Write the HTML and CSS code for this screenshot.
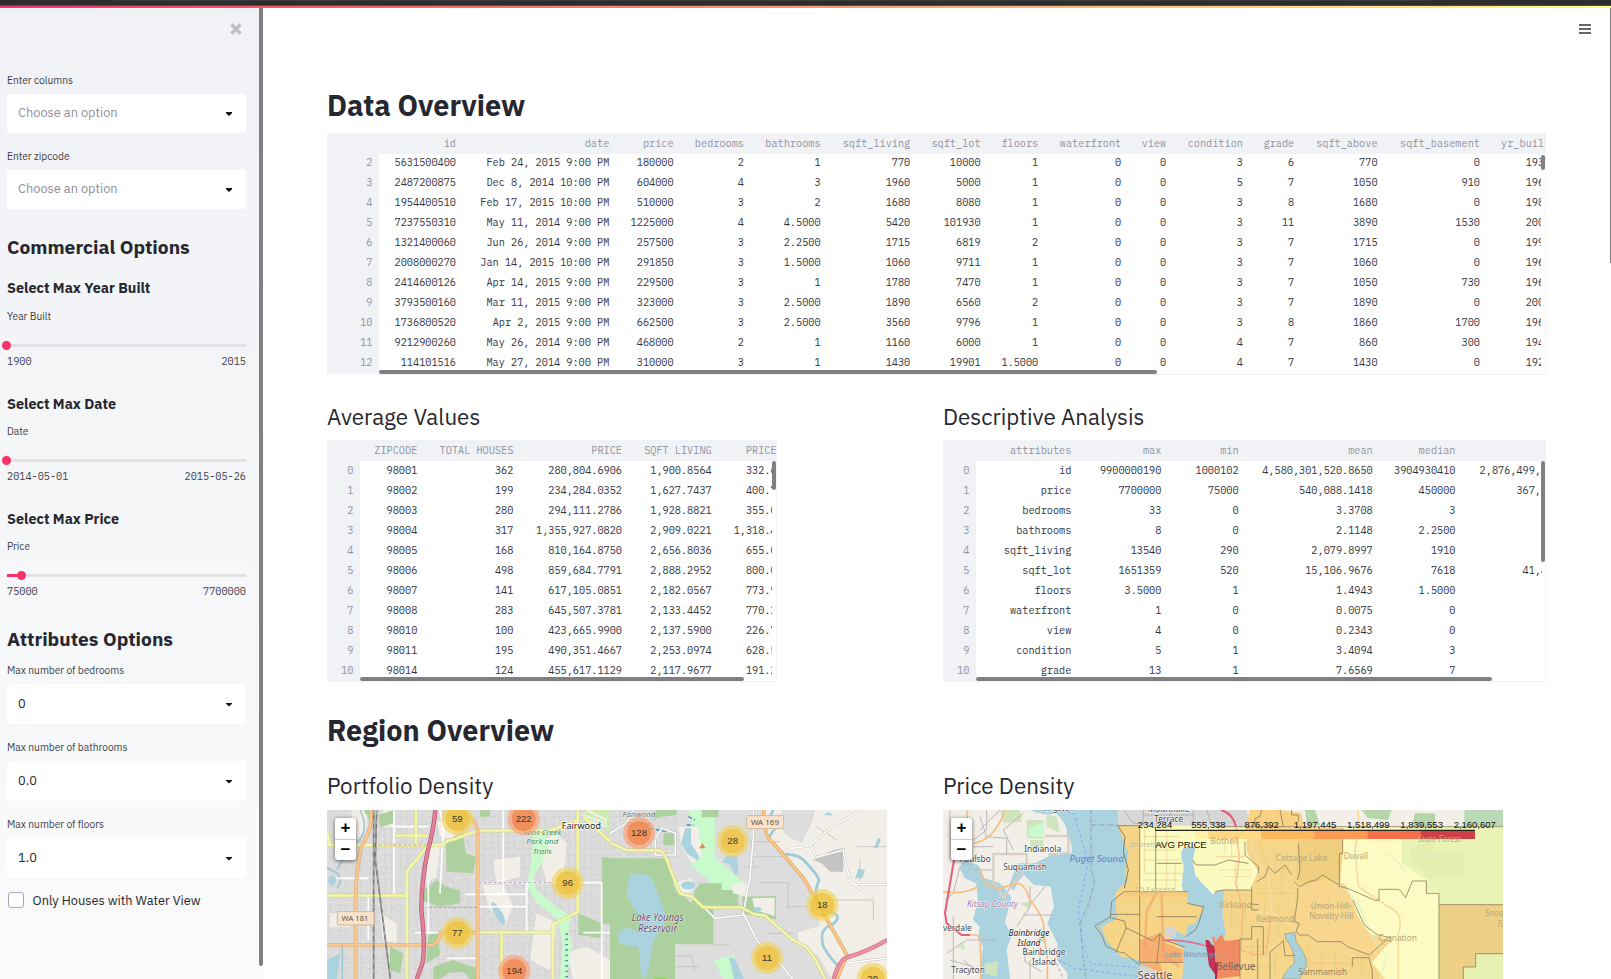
FILE: index.html
```html
<!DOCTYPE html>
<html lang="en">
<head>
<meta charset="utf-8">
<title>House data</title>
<link rel="stylesheet" href="styles.css">
</head>
<body>
<div class="chrome"><div class="chrome-tab"></div></div>
<div class="decoration"></div>
<div class="app">
  <aside class="sidebar">
    <div class="close"><svg width="12" height="12" viewBox="0 0 12 12"><path d="M1.5 1.5 10.5 10.5M10.5 1.5 1.5 10.5" stroke="#bdbfc5" stroke-width="3.2" fill="none"/></svg></div>
    <div class="label first">Enter columns</div>
    <div class="select empty"><span>Choose an option</span><i class="caret"></i></div>
    <div class="label gap">Enter zipcode</div>
    <div class="select empty"><span>Choose an option</span><i class="caret"></i></div>
    <h2 class="side-title t1">Commercial Options</h2>
    <h3 class="side-sub s1">Select Max Year Built</h3>
    <div class="label tight year">Year Built</div>
    <div class="slider"><b></b></div>
    <div class="ticks"><span>1900</span><span>2015</span></div>
    <h3 class="side-sub">Select Max Date</h3>
    <div class="label tight">Date</div>
    <div class="slider"><b></b></div>
    <div class="ticks"><span>2014-05-01</span><span>2015-05-26</span></div>
    <h3 class="side-sub">Select Max Price</h3>
    <div class="label tight">Price</div>
    <div class="slider price"><b></b></div>
    <div class="ticks"><span>75000</span><span>7700000</span></div>
    <h2 class="side-title t2">Attributes Options</h2>
    <div class="label attr">Max number of bedrooms</div>
    <div class="select tall"><span>0</span><i class="caret"></i></div>
    <div class="label gap">Max number of bathrooms</div>
    <div class="select tall"><span>0.0</span><i class="caret"></i></div>
    <div class="label gap">Max number of floors</div>
    <div class="select tall"><span>1.0</span><i class="caret"></i></div>
    <div class="check"><span class="box"></span><span class="check-text">Only Houses with Water View</span></div>
    <div class="side-scroll"></div>
  </aside>
  <main class="main">
    <div class="menu"><svg width="12" height="10" viewBox="0 0 12 10"><path d="M0 1H12M0 5H12M0 9H12" stroke="#33343f" stroke-width="1.4"/></svg></div>
    <div class="page-scroll"></div>
    <h1 class="title d1">Data Overview</h1>
    <div class="frame" id="overview"></div>
    <div class="cols">
      <section><h2 class="sub a1">Average Values</h2><div class="frame average" id="average"></div></section>
      <section><h2 class="sub a2">Descriptive Analysis</h2><div class="frame" id="descriptive"></div></section>
    </div>
    <h1 class="title region">Region Overview</h1>
    <div class="cols maps">
      <section><h2 class="sub a3">Portfolio Density</h2>
        <div class="map">
          <svg class="map-art" width="560" height="169" viewBox="0 0 560 169">
            <defs>
              <pattern id="st" width="46" height="38" patternUnits="userSpaceOnUse"><path d="M0 8H30V30H46M12 8V38M30 0V20M30 18H46M0 26H12" fill="none" stroke="#cecdcd" stroke-width="2"/></pattern>
            </defs>
            <rect width="560" height="169" fill="#dddddd"/>
            <g transform="translate(-7 -110) scale(.33333)">
              <rect x="21" y="330" width="850" height="507" fill="url(#st)"/>
              <g fill="#f2efe9"><path d="M95 330h45v55l-25 30-20-30zM350 360l60 20-10 40-40-10zM488 555l60 0 30 60-20 60-50-50zM650 430l60-30 30 30-10 110-50 10zM650 640l60 30-20 140-60-30zM180 640l50 30 0 60-40-10zM740 760l60-20 70 40v57h-110zM190 330h30v50h-30zM520 480l80-10 0 60-70 20zM30 640h60v40h-60zM320 440l40 0-10 90-30 20z"/></g>
              <g fill="#add19e"><path d="M175 345l45-15v40l-40 12zM378 420l50-20 10 60 30 10-8 50-80-5zM310 570l40-30 30 20 40 10 0 40-60 10-60-20zM846 472h25v200h-25zM325 705l30-10 5 70-42 25zM340 800l60-20 70 25 10 32h-30l-20-20-40 0-30 20h-20zM775 640l70 30v45l-70-10zM480 330h30v20h-30zM210 740l40 20-10 60-30-10zM130 330h20v30z"/></g>
              <path d="M640 400l35 0 10 40-15 40-30 50 10 40 60 50 45 30-10 40 10 40-15 107-20 0 8-110-18-70-60-50-30-50 15-80z" fill="#c8facc"/>
              <path d="M740 700v137" stroke="#3c8fc2" stroke-width="8" stroke-dasharray="4 12"/>
              <path d="M790 330h80v80l-20-30-50-10z" fill="#cdebb0"/>
              <path d="M790 345l70 25M800 330l60 30M800 360l60 20" stroke="#f2efe9" stroke-width="6"/>
              <g fill="#aad3df"><ellipse cx="535" cy="640" rx="11" ry="38" transform="rotate(-30 535 640)"/><ellipse cx="36" cy="542" rx="12" ry="15"/><path d="M21 780l40-20-10 77h-30z"/></g>
              <path d="M120 330q30 60-10 100T50 510M21 505q60 20 30 60M21 735h46v102" fill="none" stroke="#9cc8d6" stroke-width="5"/>
              <g fill="none" stroke="#fff" stroke-width="5"><path d="M222 330v255M215 380h110M21 735h50M50 535h95M475 548h370v289M550 330v250M620 548v150M435 583h185M360 330l10 60-10 190M325 540v160M145 590v130M790 698h80M380 775h90M400 330l-40 60M285 698h80M470 620h150"/></g>
              <g fill="none" stroke="#d6d98b" stroke-width="11"><path d="M21 435h345q15-15 40-18 60-25 80-25h205l80-30M790 350l80 75M225 407h97M288 330v105M21 587h235M325 435l-65 80v322M477 697h218M773 330v305l-75 40v162M545 697v140M30 435l-9-40"/></g>
              <g fill="none" stroke="#f4f8ad" stroke-width="7"><path d="M21 435h345q15-15 40-18 60-25 80-25h205l80-30M790 350l80 75M225 407h97M288 330v105M21 587h235M325 435l-65 80v322M477 697h218M773 330v305l-75 40v162M545 697v140M30 435l-9-40"/></g>
              <path d="M154 330q5 55-30 110-20 90-17 200v197M21 735h300q35 5 40-37h112M447 350q30 20 26 60v427" fill="none" stroke="#ddad72" stroke-width="11"/>
              <path d="M154 330q5 55-30 110-20 90-17 200v197M21 735h300q35 5 40-37h112M447 350q30 20 26 60v427" fill="none" stroke="#f8c995" stroke-width="7"/>
              <path d="M346 330q-5 60-22 120-20 90-20 180 15 130 0 170l-14 37" fill="none" stroke="#b84f6c" stroke-width="13"/>
              <path d="M346 330q-5 60-22 120-20 90-20 180 15 130 0 170l-14 37" fill="none" stroke="#e0829a" stroke-width="9"/>
              <path d="M161 330v507M170 330l-4 150 45 357" fill="none" stroke="#777" stroke-width="5"/><path d="M161 330v507M170 330l-4 150 45 357" fill="none" stroke="#ccc" stroke-width="2" stroke-dasharray="14 14"/>
              <path d="M175 435h150M475 548h220M325 622h145" stroke="#b89ab8" stroke-width="3" stroke-dasharray="10 5"/>
              <rect x="52" y="635" width="110" height="40" rx="3" fill="#f7e3cd" stroke="#d8b78f" stroke-width="3"/>
              <g font-family="Noto Sans,sans-serif" text-anchor="middle"><text x="105" y="663" font-size="23" fill="#6b5040">WA 181</text><g font-style="italic" font-size="24" fill="#2f8a45" stroke="#fff" stroke-width="2" paint-order="stroke"><text x="667" y="405">Soos Creek</text><text x="667" y="433">Park and</text><text x="667" y="461">Trails</text></g><text x="784" y="386" font-size="27" fill="#222" stroke="#fff" stroke-width="4" paint-order="stroke">Fairwood</text></g>
            </g>
            <g transform="translate(283 -110) scale(.33333)">
              <path d="M455 330h376v507H665l-40-70-60-40v-30l65-20-20-70-60-90-80-110z" fill="#f2efe9"/>
              <path d="M515 330h100l-10 40-30 60-40-20-25-30z" fill="#dddddd"/>
              <path d="M610 480l60-30 30-5v70h-40l-25-25z" fill="#c4c4c4"/>
              <path d="M0 330h200v145H0z" fill="#dddddd"/><path d="M0 330h200v145H0z" fill="url(#st)"/>
              <path d="M0 475h165l40 100 40 35 65 15v108H195v104H0z" fill="#add19e"/>
              <path d="M235 330h60l20 25v60l0 60 85 70 5 35-20 0-40-10-30 0-20-30-50-40 25-60-20-60z" fill="#c8facc"/>
              <path d="M140 330h60l0 15-50 5-20 10zM275 330h50v22h-50zM160 400h38v35h-38zM270 550l65 0 0 20 50 0v50h-60l-80-10 10-40zM395 590l103-2v70l-95-15z" fill="#add19e"/>
              <path d="M427 595l67-2v55l-60-18zM205 380l60 0 10 90-30 20-30-50zM360 550h50v40l-40-10zM190 550l50-15 20 20-20 25-40-5z" fill="#f2efe9"/>
              <path d="M420 330h44l10 80 130 150-10 60-90-10v-25H418z" fill="#dddddd"/>
              <path d="M310 780l60-15 30 72h-60z" fill="#c8facc"/>
              <g fill="#aad3df"><path d="M60 520l60 5 30 70 20 60-40 70-20 105-15 0-10-90q-70 0-60-35t60-10l5-40-40-70zM225 385l18 0 0 45 25 40-5 12-30-20-20-30zM345 470l35-5 5 50-8 12-20-35-20-5z"/><ellipse cx="235" cy="556" rx="22" ry="12"/><path d="M357 770q25 5 30 35l15 32h-30zM790 445l15-32 8 5-10 27zM735 535l10-30 20 5-8 25zM640 345l15-10 15 12z"/><ellipse cx="442" cy="628" rx="12" ry="7"/></g>
              <path d="M478 410l17-25-20-25 15-30M515 465q50-10 80 30 40 45 30 50-25 60 30 90 50 10 10 40-40 10-25 65 30 50 50 60" fill="none" stroke="#9dcbd9" stroke-width="8"/>
              <path d="M120 385l50 10M235 350l20 10M230 375h20" stroke="#3c8fc2" stroke-width="4" stroke-dasharray="12 6"/>
              <path d="M420 425h90M430 470h100M400 500h45M450 548h85v80M530 620h65M550 700h-75M310 735h50M195 770l50-5 10 50M195 800h75M620 380l60 40M740 440h90M750 480v65M670 600h120v60" fill="none" stroke="#c4c2c0" stroke-width="2.5"/>
              <path d="M430 330v80l-10 120-20 110 40 80 70 70 40 50M136 420v45h60v-65l-40-15-20 30M0 400l50-30 20-40M400 645l-85 10-30-30M831 775l-50 5-70 10M515 465q20-25 55-22l30-8 20 37 80-22q5 60 30 102l60 42M600 435l60-50 90-55M725 553h106" fill="none" stroke="#b5b3b0" stroke-width="7"/>
              <path d="M430 330v80l-10 120-20 110 40 80 70 70 40 50M136 420v45h60v-65l-40-15-20 30M0 400l50-30 20-40M400 645l-85 10-30-30M831 775l-50 5-70 10M515 465q20-25 55-22l30-8 20 37 80-22q5 60 30 102l60 42M600 435l60-50 90-55M725 553h106" fill="none" stroke="#fff" stroke-width="5"/>
              <path d="M0 428l50 23h100q15 5 30 55l30 75 35 8 35 33h115l35 20 35 5 80 70 45 25 25 35 30 60" fill="none" stroke="#cfd08b" stroke-width="11"/><path d="M0 428l50 23h100q15 5 30 55l30 75 35 8 35 33h115l35 20 35 5 80 70 45 25 25 35 30 60" fill="none" stroke="#f4f8ad" stroke-width="7"/>
              <path d="M461 330q0 80 25 95l95 110 130 230-30 72" fill="none" stroke="#d9a66a" stroke-width="11"/><path d="M461 330q0 80 25 95l95 110 130 230-30 72" fill="none" stroke="#fbc88a" stroke-width="7"/>
              <path d="M831 720q-60 35-120 52-25 10-40 65" fill="none" stroke="#d0708a" stroke-width="13"/><path d="M831 720q-60 35-120 52-25 10-40 65" fill="none" stroke="#e892a2" stroke-width="9"/>
              <path d="M277 429l9 16h-18z" fill="#d08f55"/>
              <rect x="410" y="347" width="111" height="39" rx="3" fill="#f7e3cd" stroke="#d8b78f" stroke-width="3"/>
              <g font-family="Noto Sans,sans-serif" text-anchor="middle"><text x="465" y="375" font-size="24" fill="#6b5040">WA 169</text><g font-style="italic" fill="#654b68" stroke="#fff" stroke-width="2" paint-order="stroke"><text x="87" y="351" font-size="24" fill="#666">Fairwood</text><text x="87" y="380" font-size="24" fill="#666">Greens</text><g font-size="30"><text x="143" y="662" textLength="156" lengthAdjust="spacingAndGlyphs">Lake Youngs</text><text x="143" y="695" textLength="118" lengthAdjust="spacingAndGlyphs">Reservoir</text></g></g></g>
              <circle cx="152" cy="877" r="46" fill="#9bd556"/>
            </g>
            <g transform="scale(.33333)" font-family="Liberation Sans,sans-serif" font-size="25" text-anchor="middle" fill="#3a3730" id="clusters"></g>
          </svg>
          <div class="zoom"><span>+</span><span>−</span></div>
        </div></section>
      <section><h2 class="sub a4">Price Density</h2>
        <div class="map">
          <svg class="map-art" width="560" height="169" viewBox="0 0 560 169">
            <rect width="560" height="169" fill="#aad3df"/>
            <g transform="translate(-13 -50) scale(.33333)">
              <g fill="#f2efe9"><path d="M39 150h260q50 20 80 10 40 40 30 70 20 10 15 50l-60 5-50 25-50 0-25 60q-5 15 20 25l-10 25-25-35-15-15-45-15-20-40-45-15-10 25 15 30 35 15 5 50-15 60 20 20-5 30 15 30-10 97H39zM262 365l20-20 30 30 50 5 10 60-20 50 30 60 0 50 30 40v17H240l-10-90 15-40-20-40 15-60z"/></g>
              <g fill="#cfe3bd"><path d="M210 150h60l5 35-55 5zM290 180l50 0 0 55h-50zM300 240h40v30h-40zM350 165l30 5 10 50-40-20zM165 610l40-5-5 45-40-10zM270 430l30-5v25zM330 520l20 10-5 20-20-10zM80 560l20-10 5 20z"/></g>
              <path d="M295 230v-25l45-20v45z" fill="#c8facc"/><path d="M345 228h70v50l-60 5M190 282h100v40l-50 60-20 35-15-30-15-20z" fill="none" stroke="#d9cfc6" stroke-width="7"/>
              <path d="M60 150v150M90 320l-20 80-25 20M150 170l20 60 60 5v50M130 260h60M50 580l60-40 90 0M60 600l70 20M300 380v60l-40 60M345 380l-45 55M280 465h90M300 600v57M330 560v50M170 150v60l-40 30M250 270l-30-60 60-50M130 330l60 0M210 150l-60 60M70 470v187M100 600l60 50M140 280l-30 60M285 545v60l50 30" fill="none" stroke="#b9b6bb" stroke-width="3"/>
              <path d="M225 150q-30 90-95 100M39 395q60 10 105-15M150 325q10 60 60 60l50-15q25 0 40 50 50 60 40 100l12 70v67M112 150v40M110 525h30q15 0 12 132" fill="none" stroke="#f6bd80" stroke-width="5"/>
              <path d="M72 300l-27 160 5 30 45 35h25" fill="none" stroke="#e2607e" stroke-width="6"/>
              <path d="M483 150v170l10 50-20 70-20 40q0 90 15 177M485 195h85" fill="none" stroke="#9198bd" stroke-width="3" stroke-dasharray="12 5 4 5"/>
              <path d="M380 152l50 5 45 150-30 140q5 110 40 165l130 10M385 600l50 25 190 25M380 610l20 47" fill="none" stroke="#84a8ef" stroke-width="3" stroke-dasharray="9 8"/>
              <path d="M563 150h307v50H565z" fill="#d8d8d8"/><path d="M580 150l30 40 30 0M640 150v48M720 150v48M790 150v48M640 165h150M830 150l15 48" stroke="#aaa" stroke-width="2.5" fill="none"/>
              <path d="M563 197h66v198h145l-2 35 22 5 27 5-15 50-32 5-8 34-30-18-10 26 30 10 5 20v90l-60 7-72-65-55-8-45-50-15-40 46-25-4-80 40-35-12-20 12-60z" fill="#f6d587"/>
              <path d="M629 197h241v180l-20 28-55-60-10-50-20 0 0-15-10 100 5 15h-131z" fill="#fbfbc0"/>
              <path d="M755 300q-5-30 10-40h38l-14 45 10 60 50 40 21-50v302H757l5-90q-50-30-30-45l35 10 40-60 14-30-45-40 0-50z" fill="#aad3df"/>
              <path d="M788 300l10-45 72-10v130l-20 28-40-40z" fill="#fbfbc0"/>
              <path d="M629 540l60-20 20 30 50 20v35l-10 52h-50l-20-25-50-22z" fill="#f7af70"/>
              <path d="M690 608l69 0v30l-5 19h-50z" fill="#f6d587"/>
              <path d="M708 500h30v35l-30-5z" fill="#d8d4d4"/>
              <path d="M644 200v140M640 230h110M640 270h100M640 300h110M650 340h110M640 360h110M650 440h130M580 410v80M560 440h100M600 500l20 80M560 500l60 50M710 210v190M735 310v80M700 420v100" stroke="#ecd9a0" stroke-width="3" fill="none"/>
              <path d="M680 395l-30 60-5 110M695 400l5 190 50 30" stroke="#ef9a63" stroke-width="8" fill="none" opacity=".5"/>
              <path d="M563 197h66v198M583 395h192M629 395v215M541 463h88M541 473l42 10 5 20 80 40 22-22 15 20 60 20M583 395l-38 30-4 45-46 28 22 30M690 521l-10 90M629 607h130M772 430l22 5 27 5-15 50-10 20-28 20M680 310h75M677 200v190M680 470l120 0M788 300l10 15 72 0M589 503l-32 75M517 528l10 30 45 20 10 0 48 38" fill="none" stroke="#8a7a5c" stroke-width="2.5"/>
              <path d="M583 385l12-55-15-55 5-45-22-33" fill="none" stroke="#8a7a5c" stroke-width="3"/>
              <rect x="583" y="395" width="190" height="15" fill="#f4bf7b" opacity=".5"/>
              <path d="M700 541q60-5 140 20" fill="none" stroke="#e0708d" stroke-width="5"/>
              <path d="M632 615l48 18 10 24H625z" fill="#d7d4d4"/>
              <path d="M826 540l10 0 10 15 24 5v97h-5l-28-40z" fill="#c23252"/><path d="M846 530l8 0 4 20 12-20v70l-15-30z" fill="#f08b64"/>
              <g font-family="Noto Sans,sans-serif" text-anchor="middle" font-size="25" fill="#434343" stroke="#fff" stroke-width="3" paint-order="stroke"><text x="382" y="153">Kingston</text><text x="338" y="275">Indianola</text><text x="135" y="306">Poulsbo</text><text x="285" y="329">Suquamish</text><text x="82" y="514">verdale</text><text x="342" y="584">Bainbridge</text><text x="342" y="614">Island</text><text x="114" y="638">Tracyton</text><text x="716" y="157">Mountlake</text><text x="716" y="186">Terrace</text><text x="675" y="657" font-size="32">Seattle</text><g font-style="italic"><text x="297" y="529" fill="#222">Bainbridge</text><text x="297" y="557" fill="#222">Island</text><text x="187" y="442" fill="#9a75a3">Kitsap County</text><text x="500" y="306" font-size="29" fill="#6681bd" stroke="none">Puget Sound</text></g></g>
              <g font-family="Noto Sans,sans-serif" text-anchor="middle" font-size="24" fill="#c7ba97"><text x="650" y="262">Shoreline</text><text x="675" y="397">I 5 Express</text><text x="795" y="590" font-style="italic" fill="#7f93b8">Lake Washington</text></g>
            </g>
            <g transform="translate(272 -50) scale(.33333)">
              <path d="M0 150h864v60H0z" fill="#f2efe9"/><path d="M0 150h95l10 50H0z" fill="#d7d4d4"/><path d="M440 150h90l-10 30-60-5zM600 160h60v40h-70zM270 150h30l15 45-40 0z" fill="#b6d6aa"/><path d="M748 150h116v50H748z" fill="#b9dab4"/>
              <path d="M0 205h864v452H0z" fill="#f5d68a"/>
              <path d="M0 205h95v70l35 60-20 40v15H22L0 400z" fill="#fbfbc0"/>
              <path d="M383 200h481v234H672v223H510l-40-50 55-60-25-15-40-10-35-60-20-60-30-25z" fill="#fbfbc3"/>
              <path d="M560 200h304v234H672v-40h-37v-35l-75-50z" fill="#eaf3b6"/>
              <path d="M585 265l60-20 20 30h50l35-10v90H640l-30-30-20-10z" fill="#e4eeb0"/>
              <path d="M675 434h189v147h-82v40h-37v36h-70z" fill="#ebd085"/><path d="M782 581h82v76H745v-36h37z" fill="#e6f0b1"/>
              <path d="M105 150h95l30 50v10H90zM200 150l60 10 5 40h-60z" fill="#f9d283"/>
              <path d="M250 205h133v80l-10 80-35-10-40 15-25 10-20-20-8-30z" fill="#f0cf81"/>
              <path d="M255 380l30-10 50-15 60 20 30 100 40 45 55 25-50 40-25 10-60-40-90 0-50-45z" fill="#f9d68e"/>
              <path d="M0 395l27-5-5 70 10 60-8 30-24 0z" fill="#aad3df"/>
              <path d="M0 545l20-22 10 20 45-5 0 110-75 9z" fill="#f08b64"/>
              <path d="M18 150q40 15 45 50l10 90-10 80 20 80-5 120 40 15 35-5 15-110" fill="none" stroke="#f5b27d" stroke-width="5" opacity=".7"/><path d="M18 150q35 10 45 50" stroke="#e4587d" stroke-width="6" fill="none"/>
              <path d="M100 205q20 110 60 140l10 110 80 60 50 20 80 40 60 20M430 150v60l-10 60 10 110 90 60q50 20 30 80v137M110 455l80 10M0 290h90M210 370l30 70" fill="none" stroke="#f9dba0" stroke-width="5"/>
              <path d="M385 380l50 60 30 80 50 70-20 67M640 290l40-20M430 270l-25 25M520 280l60 60" fill="none" stroke="#dceecb" stroke-width="5" stroke-dasharray="7 3"/>
              <path d="M30 220v60M50 210v80M10 330h100M20 350h90M60 300v80M50 400v110M90 400v80M40 440h70M40 480h70M130 240l30 80M150 230h80M180 260v70M200 330v80M130 400h110M150 430v60M190 440v90M270 240h90M300 220v100M320 260l60 50M300 400v90M340 400v100M270 440h140M110 520v100M90 560h60M180 580v70M100 620h80M280 560v90M320 570v80M360 580v70M290 610h120M440 590v60" fill="none" stroke="#e2bf82" stroke-width="2.5" opacity=".5"/>
              <path d="M209 522l30-5 5 30q35 40 30 70l-20 40h-52q10-30 35-45 5-40-25-75z" fill="#a9d1dc" stroke="#9f9a76" stroke-width="2"/>
              <path d="M0 200h864M90 245v40l40 35v20M0 315l40-15 60 10M110 380v70l20 0M0 395l25-5h85M112 433l20 0M250 250l5 80-8 30M383 205v75l-10 0v95l-35-20-15-10-20 15-20 5-30 15-15-15M230 345l-20-30-30 25-20-20-10 30-25 15M248 385v30l-10 70 15 5-10 25 10 10 25 0 30 20h70l20 15 65 25 50-45 15 5v-12l-40-8-40-30-35-75M370 378l30 8 80 35h12v-33l60 0 20 25 20-50h42v37h38v263M672 434h192M782 581h82M782 581v40h-37v36M110 500v37H75v119M110 500h35v85M165 657v-80l40-35 5 45h30M128 537v120M412 620v-27h50l10 40v24M140 150l-5 20-15 5v25M195 150l10 50M230 150v15h20v20" fill="none" stroke="#8f815e" stroke-width="2.5"/>
              <path d="M0 605l10 5-5 50H0z" fill="#b8204d"/>
              <rect x="-60" y="213" width="40" height="24" fill="#fff0a8"/><rect x="-20" y="213" width="160" height="24" fill="#fdd884"/><rect x="138" y="213" width="162" height="24" fill="#fdb75e"/><rect x="298" y="213" width="162" height="24" fill="#fb9a50"/><rect x="458" y="213" width="161" height="24" fill="#f56f4a"/><rect x="617" y="213" width="163" height="24" fill="#ce3f48"/>
              <path d="M-180 211H780" stroke="#28251e" stroke-width="4"/>
              <g font-family="Noto Sans,sans-serif" text-anchor="middle" font-size="25" fill="#b8a77a"><text x="28" y="252">Bothell</text><text x="260" y="304">Cottage Lake</text><text x="423" y="297">Duvall</text><text x="62" y="444">Kirkland</text><text x="180" y="487">Redmond</text><text x="349" y="446">Union Hill-</text><text x="349" y="476">Novelty Hill</text><text x="548" y="544">Carnation</text><text x="62" y="631" font-size="30" fill="#6f6a61">Bellevue</text><text x="323" y="644" fill="#8f8465">Sammamish</text><text x="673" y="246" font-style="italic">State Forest</text><text x="810" y="467" text-anchor="start" font-style="italic">Snoqualmie</text><text x="848" y="500" text-anchor="start" font-style="italic">Forest</text><text x="14" y="591" font-size="20">ton</text></g>
              <g font-family="Liberation Sans,sans-serif" text-anchor="middle" font-size="25" fill="#111"><text x="-180" y="203" textLength="103" lengthAdjust="spacingAndGlyphs">234,284</text><text x="-20" y="203" textLength="103" lengthAdjust="spacingAndGlyphs">555,338</text><text x="140" y="203" textLength="103" lengthAdjust="spacingAndGlyphs">876,392</text><text x="300" y="203" textLength="128" lengthAdjust="spacingAndGlyphs">1,197,445</text><text x="460" y="203" textLength="128" lengthAdjust="spacingAndGlyphs">1,518,499</text><text x="620" y="203" textLength="128" lengthAdjust="spacingAndGlyphs">1,839,553</text><text x="779" y="203" textLength="126" lengthAdjust="spacingAndGlyphs">2,160,607</text><text x="-102" y="263" textLength="154" lengthAdjust="spacingAndGlyphs">AVG PRICE</text></g>
            </g>
          </svg>
          <div class="zoom"><span>+</span><span>−</span></div>
        </div></section>
    </div>
  </main>
</div>
<script src="app.js"></script>
</body>
</html>
```
FILE: styles.css
```css
* { box-sizing: border-box; }
html, body { margin: 0; height: 979px; overflow: hidden; }
body { background: #fff; color: #262730; font-family: "IBM Plex Sans", Roboto, "Noto Sans", sans-serif; font-size: 12.8px; }
h1, h2, h3 { margin: 0; white-space: nowrap; }
.chrome { height: 5px; background: #2d2d2d; }
.chrome-tab { width: 1317px; height: 1px; margin-left: 113px; background: #3d3d3d; }
.decoration { height: 3px; background: linear-gradient(90deg, #f63366, #fffd80); border-top: 1px solid #54484b; }
.app { display: flex; height: 971px; }
.sidebar { position: relative; width: 263px; padding: 9px 17px 0 7px; background: linear-gradient(#f0f2f6, #fafafa); flex: none; }
.side-scroll { position: absolute; right: 0; top: 0; width: 4px; height: 958px; background: #808080; border-radius: 0 0 2px 2px; }
.close { height: 24px; display: flex; align-items: center; justify-content: flex-end; padding-right: 4px; }
.label { height: 16px; line-height: 18px; font-size: 10.24px; color: #3d3e48; letter-spacing: -.02px; }
.label.first { margin-top: 31px; }
.label.gap { margin-top: 15px; }
.label.tight { margin-top: 10px; line-height: 16px; }
.label.year { line-height: 18px; margin-bottom: 17px; }
.label.year + .slider { margin-top: 0; }
.label.attr { margin-top: 9px; }
.select { height: 39px; margin-top: 6px; padding: 0 14px 2px 11px; border-radius: 3px; background: #fff; display: flex; align-items: center; justify-content: space-between; font-size: 12.8px; }
.select.tall { height: 40px; }
.select.empty span { color: #8d8f9d; }
.caret { width: 6px; height: 4px; margin: 3px 0 0; background: #111; clip-path: polygon(0 0, 100% 0, 100% 30%, 50% 100%, 0 30%); }
.side-title { height: 26px; line-height: 24px; font-size: 19.2px; font-weight: 700; }
.t1 { margin-top: 26px; }
.t2 { margin-top: 28px; }
.side-sub { height: 20px; line-height: 20px; font-size: 14.4px; font-weight: 700; margin-top: 25px; }
.side-sub.s1 { margin-top: 17px; }
.slider { height: 9px; margin-top: 16px; padding: 3px 0; background: #e1e2e4 content-box; display: flex; align-items: center; }
.slider b { width: 9px; height: 9px; margin: 0 0 0 -5px; border-radius: 50%; background: #f63366; flex: none; }
.slider.price { background: linear-gradient(90deg, #f63366 14px, #e1e2e4 14px) content-box; }
.slider.price b { margin-left: 10px; }
.ticks { height: 16px; margin-top: 3px; display: flex; justify-content: space-between; font: 10.24px/18px "IBM Plex Mono", "Liberation Mono", monospace; color: #40414c; }
.check { margin-top: 14px; height: 16px; display: flex; align-items: center; padding-left: 1px; }
.box { width: 16px; height: 16px; border: 1px solid #a3a8b8; border-radius: 3px; background: #fff; }
.check-text { margin-left: 8.6px; white-space: nowrap; }
.main { position: relative; flex: 1; padding: 78px 65px 0 64px; overflow: hidden; }
.menu { position: absolute; right: 20px; top: 16px; height: 10px; display: flex; }
.page-scroll { position: absolute; right: 0; top: 0; width: 1px; height: 255px; background: #808080; }
.title { height: 38px; line-height: 38px; font-size: 28.8px; font-weight: 700; margin-bottom: 9px; }
.title.region { margin-top: 29px; margin-bottom: 22px; }
.cols { display: grid; grid-template-columns: 603px 603px; gap: 13px; margin-top: 27px; }
.cols.maps { margin-top: 0; }
.sub { height: 30px; line-height: 30px; font-size: 22.4px; font-weight: 400; margin-bottom: 8px; }
.maps .sub { margin-bottom: 9px; }
.frame { position: relative; height: 242px; border: solid #f0f2f6; border-width: 0 1px 1px 0; overflow: hidden; font: 10.24px/20px "IBM Plex Mono", "Liberation Mono", monospace; color: #33343f; }
#overview { width: 1219px; }
.average { width: 450px; }
.trow { display: flex; height: 20px; white-space: pre; }
.thead { height: 21px; line-height: 22px; background: #f0f2f6; color: #9093a3; }
.cell { flex: none; display: flex; justify-content: flex-end; padding-right: 7px; overflow: visible; }
.cell.idx { background: #f0f2f6; color: #9093a3; padding-right: 6.5px; }
.tbody { height: 220px; overflow: hidden; margin-right: 4px; }
#descriptive .tbody { margin-right: 3px; }
.shift .trow:first-child { height: 19px; line-height: 18px; }
.hbar, .vbar { position: absolute; background: #808080; border-radius: 2px; }
.hbar { height: 4px; bottom: 0; }
.vbar { width: 4px; right: 0; }
.map { position: relative; width: 560px; height: 169px; overflow: hidden; }
.map-art { display: block; }
.zoom { position: absolute; left: 8px; top: 8px; width: 21px; height: 42px; display: flex; flex-direction: column; background: #fff; border-radius: 3px; box-shadow: 0 1px 4px rgba(0,0,0,.6); }
.zoom span { height: 21px; font: bold 17px/20px "Liberation Sans", sans-serif; text-align: center; color: #000; }
.zoom span + span { border-top: 1px solid #ccc; }
```
FILE: app.js
```javascript
const tables = {
  overview: {
    widths: [52, 84, 153.3, 64.3, 70.4, 76.6, 89.7, 70.3, 57.7, 83, 45, 76.7, 51.3, 83.3, 102.4, 70.3],
    shift: true, hbar: [52, 778], vbar: [22, 15],
    head: ['', 'id', 'date', 'price', 'bedrooms', 'bathrooms', 'sqft_living', 'sqft_lot', 'floors', 'waterfront', 'view', 'condition', 'grade', 'sqft_above', 'sqft_basement', 'yr_built'],
    rows: `2|5631500400|Feb 24, 2015 9:00 PM|180000|2|1|770|10000|1|0|0|3|6|770|0|1933
3|2487200875|Dec 8, 2014 10:00 PM|604000|4|3|1960|5000|1|0|0|5|7|1050|910|1965
4|1954400510|Feb 17, 2015 10:00 PM|510000|3|2|1680|8080|1|0|0|3|8|1680|0|1987
5|7237550310|May 11, 2014 9:00 PM|1225000|4|4.5000|5420|101930|1|0|0|3|11|3890|1530|2001
6|1321400060|Jun 26, 2014 9:00 PM|257500|3|2.2500|1715|6819|2|0|0|3|7|1715|0|1995
7|2008000270|Jan 14, 2015 10:00 PM|291850|3|1.5000|1060|9711|1|0|0|3|7|1060|0|1963
8|2414600126|Apr 14, 2015 9:00 PM|229500|3|1|1780|7470|1|0|0|3|7|1050|730|1960
9|3793500160|Mar 11, 2015 9:00 PM|323000|3|2.5000|1890|6560|2|0|0|3|7|1890|0|2003
10|1736800520|Apr 2, 2015 9:00 PM|662500|3|2.5000|3560|9796|1|0|0|3|8|1860|1700|1965
11|9212900260|May 26, 2014 9:00 PM|468000|2|1|1160|6000|1|0|0|4|7|860|300|1942
12|114101516|May 27, 2014 9:00 PM|310000|3|1|1430|19901|1.5000|0|0|4|7|1430|0|1927`
  },
  average: {
    widths: [33, 64.3, 96, 108.7, 89.7, 83.4],
    hbar: [33, 384], vbar: [21, 29],
    head: ['', 'ZIPCODE', 'TOTAL HOUSES', 'PRICE', 'SQFT LIVING', 'PRICE/M2'],
    rows: `0|98001|362|280,804.6906|1,900.8564|332.6042
1|98002|199|234,284.0352|1,627.7437|400.7120
2|98003|280|294,111.2786|1,928.8821|355.0316
3|98004|317|1,355,927.0820|2,909.0221|1,318.4021
4|98005|168|810,164.8750|2,656.8036|655.0120
5|98006|498|859,684.7791|2,888.2952|800.0412
6|98007|141|617,105.0851|2,182.0567|773.9214
7|98008|283|645,507.3781|2,133.4452|770.2152
8|98010|100|423,665.9900|2,137.5900|226.7302
9|98011|195|490,351.4667|2,253.0974|628.5210
10|98014|124|455,617.1129|2,117.9677|191.2341`
  },
  descriptive: {
    widths: [33, 102.4, 90, 77.2, 134.2, 82.7, 134.7],
    hbar: [33, 516], vbar: [21, 101],
    head: ['', 'attributes', 'max', 'min', 'mean', 'median', 'std'],
    rows: `0|id|9900000190|1000102|4,580,301,520.8650|3904930410|2,876,499,023.4275
1|price|7700000|75000|540,088.1418|450000|367,118.7032
2|bedrooms|33|0|3.3708|3|0.9300
3|bathrooms|8|0|2.1148|2.2500|0.7701
4|sqft_living|13540|290|2,079.8997|1910|918.4197
5|sqft_lot|1651359|520|15,106.9676|7618|41,419.5533
6|floors|3.5000|1|1.4943|1.5000|0.5400
7|waterfront|1|0|0.0075|0|0.0865
8|view|4|0|0.2343|0|0.7663
9|condition|5|1|3.4094|3|0.6507
10|grade|13|1|7.6569|7|1.1754`
  }
};

function buildRow(values, widths, cls) {
  const cells = values.map((v, i) =>
    `<div class="cell${i ? '' : ' idx'}" style="width:${widths[i]}px">${v}</div>`).join('');
  return `<div class="trow ${cls}">${cells}</div>`;
}

for (const [id, t] of Object.entries(tables)) {
  const body = t.rows.split('\n').map(r => buildRow(r.split('|'), t.widths, '')).join('');
  document.getElementById(id).innerHTML =
    buildRow(t.head, t.widths, 'thead') +
    `<div class="tbody"><div class="${t.shift ? 'shift' : ''}">${body}</div></div>` +
    `<div class="hbar" style="left:${t.hbar[0]}px;width:${t.hbar[1]}px"></div>` +
    `<div class="vbar" style="top:${t.vbar[0]}px;height:${t.vbar[1]}px"></div>`;
}

// Marker clusters: x, y, count
const clusters = [[391, 27, 59], [590, 27, 222], [722, 219, 96], [391, 369, 77], [562, 483, 194],
  [936, 69, 128], [1217, 93, 28], [1486, 285, 18], [1320, 444, 11], [1637, 506, 29]];
document.getElementById('clusters').innerHTML = clusters.map(([x, y, n]) => {
  const [outer, inner] = n > 99 ? ['#fd9c73', '#f1803f'] : ['#f1d357', '#eebf34'];
  return `<circle cx="${x}" cy="${y}" r="48" fill="${outer}" opacity=".65"/>` +
    `<circle cx="${x}" cy="${y}" r="36" fill="${inner}" opacity=".65"/>` +
    `<text x="${x}" y="${y + 9}" textLength="${String(n).length * 16}" lengthAdjust="spacingAndGlyphs">${n}</text>`;
}).join('');
```
